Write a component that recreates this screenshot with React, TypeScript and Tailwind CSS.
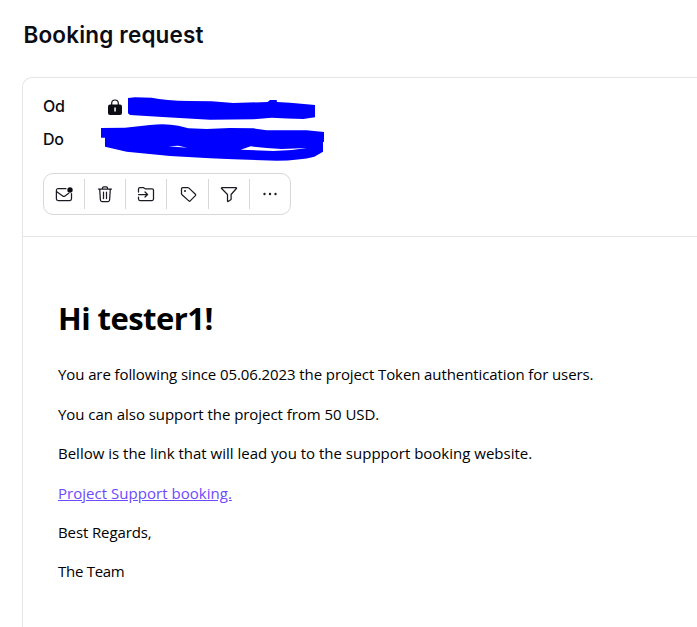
import type { ReactNode } from 'react';

const Icon = ({ children }: { children: ReactNode }) => (
  <svg className="size-5" viewBox="0 0 20 20" fill="none" stroke="#1c1b24" strokeWidth="1.25" strokeLinecap="round" strokeLinejoin="round">
    {children}
  </svg>
);

const tools = [
  {
    label: 'Unread',
    width: 'w-[41px]',
    icon: (
      <Icon>
        <path d="M12 4.500H4A1.700 1.700 0 0 0 2.400 6.200v8.600A1.700 1.700 0 0 0 4 16.500h11.800a1.700 1.700 0 0 0 1.700-1.700V9.500" />
        <path d="M2.800 7.800 8.700 11.900a2 2 0 0 0 2.300 0L14.700 9.300" />
        <circle cx="16" cy="6" r="2.700" fill="#0c0c14" stroke="none" />
      </Icon>
    ),
  },
  {
    label: 'Trash',
    width: 'w-[41px]',
    icon: (
      <Icon>
        <path d="M3.500 5h13M7.500 5V4A1.200 1.200 0 0 1 8.700 2.800h2.600A1.200 1.200 0 0 1 12.500 4v1M4.700 5l.7 11a1.600 1.600 0 0 0 1.600 1.500h6a1.600 1.600 0 0 0 1.600-1.500l.7-11M8.500 8v6.500M11.500 8v6.500" />
      </Icon>
    ),
  },
  {
    label: 'Move to',
    width: 'w-[41px]',
    icon: (
      <Icon>
        <path d="M2.500 8V5a1.500 1.500 0 0 1 1.500-1.500h3.200l2 1.300H16a1.500 1.500 0 0 1 1.500 1.500v8.700A1.500 1.500 0 0 1 16 16.500H4A1.500 1.500 0 0 1 2.500 15V13M2.500 10.500h9M9 8l2.600 2.500L9 13" />
      </Icon>
    ),
  },
  {
    label: 'Label',
    width: 'w-[42px]',
    icon: (
      <Icon>
        <path d="M3.500 4.700A1.200 1.200 0 0 1 4.700 3.500h5a1.500 1.500 0 0 1 1 .4l6.700 6.300a1 1 0 0 1 0 1.400L12.200 16.900a1 1 0 0 1-1.400 0L4 10.700a1.500 1.500 0 0 1-.5-1Z" />
        <circle cx="7" cy="7.100" r="1" fill="#1c1b24" stroke="none" />
      </Icon>
    ),
  },
  {
    label: 'Filter',
    width: 'w-[41px]',
    icon: (
      <Icon>
        <path d="M3 3.500h14a.6.6 0 0 1 .4 1l-5.300 6v5l-3 2a.4.4 0 0 1-.6-.4v-6.600L2.600 4.500A.6.6 0 0 1 3 3.500Z" />
      </Icon>
    ),
  },
  {
    label: 'More',
    width: 'w-[40px]',
    icon: (
      <Icon>
        <g fill="#1c1b24" stroke="none">
          <circle cx="4.500" cy="10" r="1.200" />
          <circle cx="10" cy="10" r="1.200" />
          <circle cx="15.500" cy="10" r="1.200" />
        </g>
      </Icon>
    ),
  },
];

export default function App() {
  return (
    <div className="flex h-[627px] w-[697px] flex-col overflow-hidden bg-white font-[Inter,sans-serif] text-[#0c0c14]">
      <h1 className="mt-[19px] ml-[23.5px] text-[22.5px] leading-8 font-semibold tracking-[0.17px] whitespace-nowrap">Booking request</h1>
      <main className="mt-[26px] ml-[22px] flex-1 rounded-tl-[10px] border-t border-l border-[#e5e5e5]">
        <header className="relative h-[159px] border-b border-[#e5e5e5] pt-[11px] pl-5">
          <div className="flex h-[33px] items-center text-base font-medium tracking-[-0.2px]">
            <span className="w-[64px]">Od</span>
            <svg className="mt-[3px] h-4 w-4" viewBox="0 0 16 16" fill="none">
              <path d="M4.700 6V4.300a3.300 3.300 0 0 1 6.600 0V6" stroke="#0c0c14" strokeWidth="1.200" />
              <rect x="1" y="5.500" width="14" height="10.500" rx="2" fill="#0c0c14" />
              <path d="M7.300 8.500h1.500v4H7.300z" fill="white" />
            </svg>
          </div>
          <div className="flex h-[33px] items-center text-base font-medium tracking-[-0.2px]">Do</div>
          <div className="mt-[18px] flex h-[42px] w-[248px] items-center rounded-[10px] border border-[#d8d8d9]">
            {tools.map(({ label, width, icon }, i) => (
              <button
                key={label}
                aria-label={label}
                className={`${width} flex h-[30px] items-center justify-center ${i < tools.length - 1 ? 'border-r border-[#d8d8d9]' : ''}`}
              >
                {icon}
              </button>
            ))}
          </div>
          <svg className="absolute top-[7px] left-[67px] h-[85px] w-[250px]" viewBox="0 0 750 255" fill="#0000ff">
            <path d="M114 39 135 37 185 38Q225 46 300 48L365 49 430 54 533 51 540 45H560L561 51 600 53 675 60V97L640 102Q590 100 545 98L490 103 360 104 230 97 120 90 114 85Z" />
            <path
              fillRule="evenodd"
              d="M33 129 105 128 180 120Q225 114 265 122L295 130 350 132 420 129 490 130 530 136 650 136 702 141V170L699 171V200L673 215Q630 226 560 227L430 223 360 220 240 213 110 200 45 185V158H33ZM235 184 265 182 292 188ZM452 194 482 184 530 189 575 192 650 189Q600 198 550 198Z"
            />
          </svg>
        </header>
        <article className="flex flex-col gap-4 pt-[59px] pl-[35px] font-['Open_Sans',sans-serif] text-[15px] leading-[23.4px] text-black">
          <h2 className="mb-[7px] text-[31px] leading-[44px] font-bold tracking-[-0.55px]">Hi tester1!</h2>
          <p className="tracking-[-0.095px] whitespace-nowrap">You are following since 05.06.2023 the project Token authentication for users.</p>
          <p className="mt-px -mb-px tracking-[-0.045px]">You can also support the project from 50 USD.</p>
          <p>Bellow is the link that will lead you to the suppport booking website.</p>
          <p className="mt-px -mb-px tracking-[0.03px]"><a className="text-[#6d4aff] underline">Project Support booking.</a></p>
          <p className="tracking-[-0.11px]">Best Regards,</p>
          <p className="tracking-[-0.28px]">The Team</p>
        </article>
      </main>
    </div>
  );
}
